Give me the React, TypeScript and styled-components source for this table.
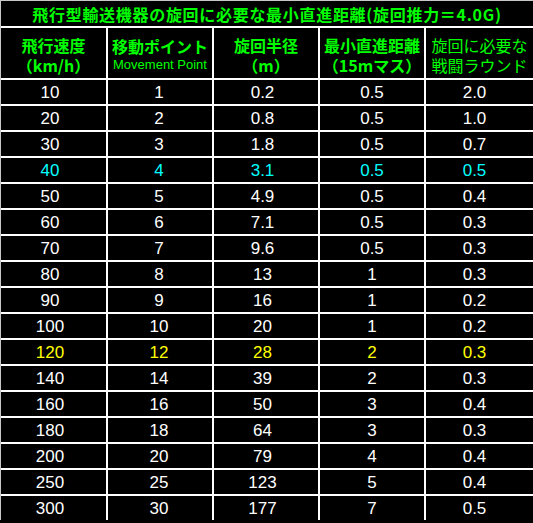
import React from "react";
import styled, {createGlobalStyle} from "styled-components";

const GREEN = "#00ff00";

const Global = createGlobalStyle`
    html, body {
        margin: 0;
        padding: 0;
        background: #000;
    }
`;

const Sheet = styled.div`
    display: grid;
    grid-template-columns: 105px 104px 104px 104px 107px;
    grid-template-rows: 25px 50px repeat(17, 24px);
    gap: 2px;
    width: 533px;
    box-sizing: border-box;
    background: #fff;
    border-top: 1px solid #c8c8c8;
    border-left: 1px solid #c8c8c8;
`;

const Title = styled.div`
    grid-column: 1 / -1;
    background: #000;
    color: ${GREEN};
    font-family: "Noto Sans CJK JP", sans-serif;
    font-weight: 700;
    font-size: 16px;
    letter-spacing: 0.7px;
    line-height: 25px;
    text-align: center;
    padding-top: 1px;
    box-sizing: border-box;
`;

const Head = styled.div<{$light?: boolean}>`
    background: #000;
    color: ${GREEN};
    display: flex;
    flex-direction: column;
    align-items: center;
    justify-content: center;
    padding-top: 3px;
    box-sizing: border-box;
    font-family: "Noto Sans CJK JP", sans-serif;
    font-weight: ${p => (p.$light ? 400 : 700)};
    font-size: 16px;
    line-height: 20px;
    white-space: nowrap;
`;

const Line = styled.span`
    display: block;
    height: 20px;
`;

const Sub = styled.span`
    display: block;
    font-family: "Liberation Sans", sans-serif;
    font-weight: 400;
    font-size: 13px;
    line-height: 18px;
`;

const Cell = styled.div<{$tone: string; $shift: number}>`
    background: #000;
    color: ${p => p.$tone};
    font-family: "Liberation Sans", sans-serif;
    font-size: 17px;
    line-height: 24px;
    text-align: center;
    padding-right: ${p => p.$shift}px;
    padding-top: 1px;
    box-sizing: border-box;
`;

const rows: [string, string, string, string, string][] = [
    ["10", "1", "0.2", "0.5", "2.0"],
    ["20", "2", "0.8", "0.5", "1.0"],
    ["30", "3", "1.8", "0.5", "0.7"],
    ["40", "4", "3.1", "0.5", "0.5"],
    ["50", "5", "4.9", "0.5", "0.4"],
    ["60", "6", "7.1", "0.5", "0.3"],
    ["70", "7", "9.6", "0.5", "0.3"],
    ["80", "8", "13", "1", "0.3"],
    ["90", "9", "16", "1", "0.2"],
    ["100", "10", "20", "1", "0.2"],
    ["120", "12", "28", "2", "0.3"],
    ["140", "14", "39", "2", "0.3"],
    ["160", "16", "50", "3", "0.4"],
    ["180", "18", "64", "3", "0.3"],
    ["200", "20", "79", "4", "0.4"],
    ["250", "25", "123", "5", "0.4"],
    ["300", "30", "177", "7", "0.5"],
];

// the values sit a little left of each column's middle
const shifts = [7, 2, 7, 0, 10];

function toneOf(speed: string) {
    if (speed === "40") return "#00ffff";
    if (speed === "120") return "#ffff00";
    return "#ffffff";
}

export default function App() {
    return (
        <>
            <Global/>
            <Sheet>
                <Title>飛行型輸送機器の旋回に必要な最小直進距離(旋回推力＝4.0G)</Title>
                <Head>
                    <Line>飛行速度</Line>
                    <Line>（km/h）</Line>
                </Head>
                <Head>
                    <Line>移動ポイント</Line>
                    <Sub>Movement Point</Sub>
                </Head>
                <Head>
                    <Line>旋回半径</Line>
                    <Line>（m）</Line>
                </Head>
                <Head>
                    <Line>最小直進距離</Line>
                    <Line>（15mマス）</Line>
                </Head>
                <Head $light>
                    <Line>旋回に必要な</Line>
                    <Line>戦闘ラウンド</Line>
                </Head>
                {rows.map(row => row.map((value, i) => (
                    <Cell key={row[0] + "-" + i} $tone={toneOf(row[0])} $shift={shifts[i]}>
                        {value}
                    </Cell>
                )))}
            </Sheet>
        </>
    );
}
